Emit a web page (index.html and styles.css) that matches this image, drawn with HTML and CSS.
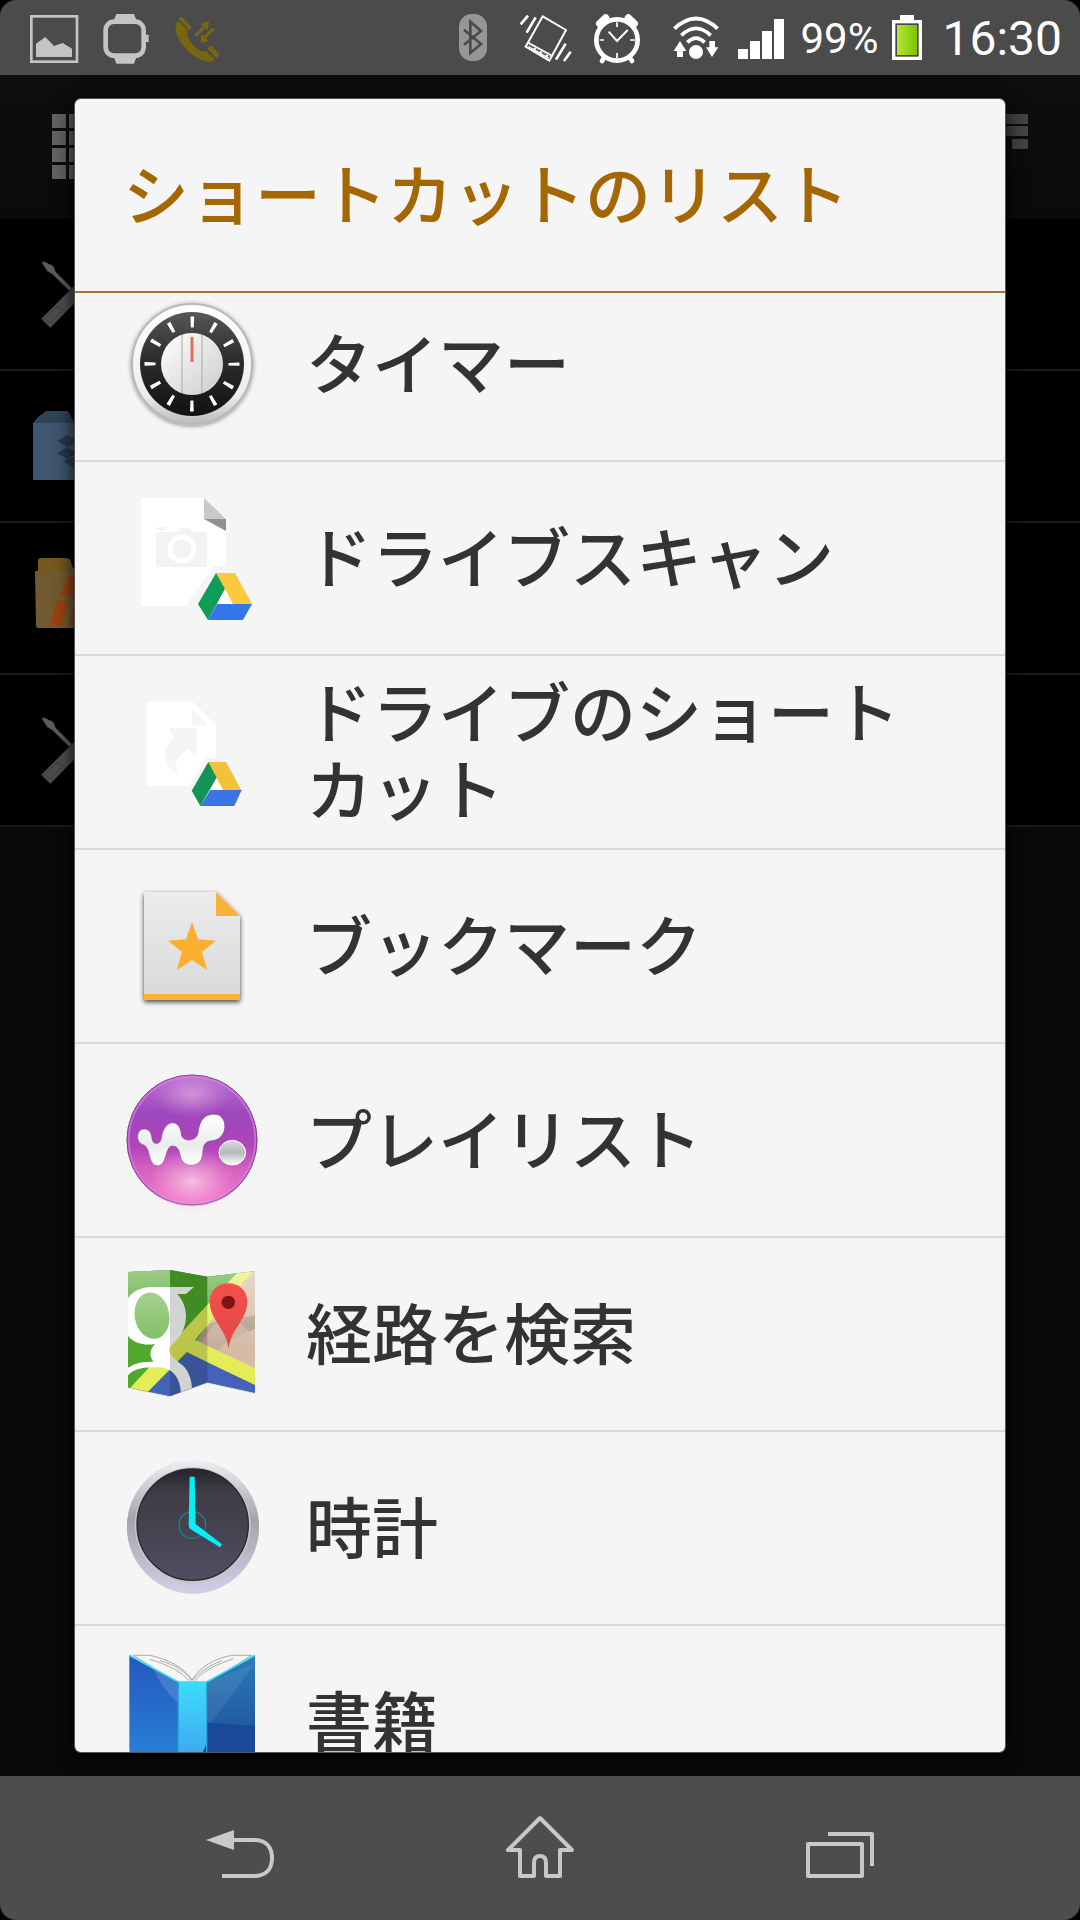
FILE: index.html
```html
<!DOCTYPE html>
<html lang="ja">
<head>
<meta charset="utf-8">
<meta name="viewport" content="width=device-width, initial-scale=1">
<title>ショートカットのリスト</title>
<link rel="stylesheet" href="styles.css">
</head>
<body>
<div class="screen">
  <header class="status-bar">
    <div class="status-group">
      <svg class="status-icon" viewBox="90 42 144 144" aria-hidden="true"><rect x="94" y="46" width="137" height="136" fill="none" stroke="#c4c4c4" stroke-width="8"/><path d="M108 168V128L136 108L162 135L188 126L216 143V168Z" fill="#c4c4c4"/></svg>
      <svg class="status-icon" viewBox="306 42 144 144" aria-hidden="true"><rect x="317" y="62" width="114" height="102" rx="25" fill="none" stroke="#c4c4c4" stroke-width="14"/><path d="M342 57L349 39H402L409 57ZM342 169L349 188H402L409 169ZM436 101H446V123H436Z" fill="#c4c4c4"/></svg>
      <svg class="status-icon" viewBox="522 42 144 144" aria-hidden="true"><g fill="#776711"><path d="M528 66C524 84 530 106 546 130C570 160 600 182 632 183L645 176L618 150L606 152C590 144 572 126 562 104L563 90L538 60Z"/><path d="M535 52L545 47L576 79L567 88ZM622 143L634 133L659 161L650 172Z"/><path d="M583 101L609 75L602 68L627 59L623 88L616 81L589 107ZM644 86L618 112L626 120L601 127L605 98L612 105L638 79Z"/></g></svg>
    </div>
    <div class="status-group">
      <svg class="status-icon" viewBox="30 42 144 144" aria-hidden="true"><rect x="60" y="39" width="84" height="141" rx="38" fill="#969696"/><path d="M75 86L126 129L94 156V62L126 90L75 131" fill="none" stroke="#4b4b4b" stroke-width="8"/></svg>
      <svg class="status-icon" viewBox="246 42 144 144" aria-hidden="true"><g fill="none" stroke="#fff"><path d="M311 46L381 87L331 179L260 137Z" stroke-width="6"/><path d="M268 125L341 165" stroke-width="5"/><path d="M270 135L330 169" stroke-width="9"/><path d="M272 134L330 167" stroke="#4b4b4b" stroke-width="4" stroke-dasharray="15 6"/><path d="M267 44L245 70M290 49L263 95M380 128L351 176M395 152L375 180" stroke-width="8"/></g></svg>
      <svg class="status-icon" viewBox="462 42 144 144" aria-hidden="true"><g fill="none" stroke="#fff"><circle cx="534" cy="117" r="62" stroke-width="14"/><path d="M509 92L534 120L566 87" stroke-width="6"/><path d="M534 64V78M534 156V172M482 117H495M573 117H588" stroke-width="5"/><path d="M482 68L500 51M586 68L568 51" stroke-width="22" stroke-linecap="round"/><path d="M495 170L489 180M573 170L579 180" stroke-width="14" stroke-linecap="round"/></g></svg>
      <svg class="status-icon" viewBox="678 42 144 144" aria-hidden="true"><g fill="none" stroke="#fff" stroke-width="11"><path d="M706 83Q771 22 836 83M727 103Q771 61 815 103M745 124Q771 99 797 124"/></g><path d="M723 120L742 150H732V168H714V150H704ZM819 168L838 139H828V120H811V139H801Z" fill="#fff"/><circle cx="771" cy="153" r="21" fill="#fff"/></svg>
      <svg class="status-icon" viewBox="894 42 144 144" aria-hidden="true"><path d="M897 144h30v30h-30ZM933 120h30v54h-30ZM969 90h30v84h-30ZM1005 54h30v120h-30Z" fill="#fff"/></svg>
      <span class="battery-level">99%</span>
      <svg class="battery-icon" viewBox="339 42 90 144" aria-hidden="true"><defs><linearGradient id="charge" x1="0" x2="1"><stop offset="0" stop-color="#b5e63a"/><stop offset="1" stop-color="#7cc400"/></linearGradient></defs><path d="M363 42H405V57H363Z" fill="#fff"/><rect x="344" y="62" width="80" height="110" fill="#484848" stroke="#fff" stroke-width="10"/><rect x="354" y="72" width="60" height="90" fill="url(#charge)"/></svg>
      <time class="clock">16:30</time>
    </div>
  </header>

  <main class="stage">
    <div class="app" aria-hidden="true">
      <div class="app-bar">
        <svg class="app-glyph" viewBox="0 0 66 66"><path d="M0 0h14v14H0ZM17 0h14v14H17ZM34 0h14v14H34ZM0 17h14v14H0ZM17 17h14v14H17ZM34 17h14v14H34ZM0 34h14v14H0ZM17 34h14v14H17ZM34 34h14v14H34ZM0 51h14v14H0ZM17 51h14v14H17ZM34 51h14v14H34Z" fill="#626262"/></svg>
        <svg class="app-glyph" viewBox="0 0 66 66"><path d="M12 0h54v10H12ZM12 12h54v10H12ZM50 25h16v10H50Z" fill="#444"/></svg>
      </div>
      <div class="app-row">
        <svg class="app-icon" viewBox="72 150 360 360"><path d="M130 232L160 246L167 264L216 312L208 320L157 270L142 262L126 237Z" fill="#5a5a5a"/><path d="M124 404L250 278L276 304L151 431Z" fill="#4d4d4d"/><path d="M134 404L172 367L188 378L152 417Z" fill="none" stroke="#383838" stroke-width="3"/></svg>
      </div>
      <div class="app-row">
        <svg class="app-icon" viewBox="0 0 120 120"><path d="M9 37L14 31L22 25H44L50 36H100V94H9Z" fill="#2f4357"/><path d="M9 37H100V92Q100 94 98 94H11Q9 94 9 92Z" fill="#3f566f"/><path d="M33 55L43 49L53 55L43 61ZM33 67L43 61L53 67L43 73ZM39 75L53 70V84Z" fill="#26394e"/></svg>
      </div>
      <div class="app-row">
        <svg class="app-icon" viewBox="0 0 120 120"><path d="M14 33V23Q14 20 17 20H42Q46 20 47 24L49 30H100V90H14Z" fill="#75571f"/><path d="M11 33H100V90H14Q12 90 12 87Z" fill="#715a31"/><path d="M45 38H53V60L35 57ZM33 62L45 64L38 87L26 88ZM48 70L53 60V88H46Z" fill="#984213"/></svg>
      </div>
      <div class="app-row">
        <svg class="app-icon" viewBox="72 150 360 360"><path d="M130 232L160 246L167 264L216 312L208 320L157 270L142 262L126 237Z" fill="#5a5a5a"/><path d="M124 404L250 278L276 304L151 431Z" fill="#4d4d4d"/><path d="M134 404L172 367L188 378L152 417Z" fill="none" stroke="#383838" stroke-width="3"/></svg>
      </div>
    </div>

    <div class="overlay">
      <section class="dialog" role="dialog" aria-labelledby="dialog-title">
        <h1 class="dialog-title" id="dialog-title">ショートカットのリスト</h1>
        <div class="dialog-body">
          <ul class="shortcut-list">
            <li><button class="shortcut" type="button">
              <svg class="shortcut-icon" viewBox="0 0 144 144" aria-hidden="true">
                <defs><linearGradient id="dialRim" x2="0" y2="1"><stop offset="0" stop-color="#fff"/><stop offset=".75" stop-color="#eee"/><stop offset="1" stop-color="#bbb"/></linearGradient><linearGradient id="dialFace" x2="0" y2="1"><stop offset="0" stop-color="#585858"/><stop offset=".4" stop-color="#303030"/><stop offset="1" stop-color="#111"/></linearGradient><linearGradient id="dialKnob" x2="1" y2="1"><stop offset="0" stop-color="#fff"/><stop offset="1" stop-color="#ccc"/></linearGradient><filter id="soft" x="-10%" y="-10%" width="120%" height="120%"><feDropShadow dx="0" dy="1" stdDeviation="2" flood-opacity=".45"/></filter></defs>
                <circle cx="72" cy="72" r="60" fill="url(#dialRim)" stroke="#b8b8b8" stroke-width="2" filter="url(#soft)"/>
                <circle cx="72" cy="72" r="52" fill="url(#dialFace)"/>
                <circle cx="72" cy="72" r="42" fill="none" stroke="#fff" stroke-width="11" stroke-dasharray="3.4 18.59" stroke-dashoffset="1.7"/>
                <circle cx="72" cy="72" r="31" fill="url(#dialKnob)"/>
                <path d="M62 43V101M82 43V101" stroke="#aaa" stroke-width="1"/><path d="M72 45V70" stroke="#e0705a" stroke-width="3"/>
              </svg>
              <span class="shortcut-label">タイマー</span></button></li>
            <li><button class="shortcut" type="button">
              <svg class="shortcut-icon" viewBox="0 0 144 144" aria-hidden="true">
                <path d="M21 12H84L106 33V80H94L72 110L67 120H21Z" fill="#fff"/><path d="M84 12L106 33H84Z" fill="#c9c9c9"/><path d="M84 33H106V45Z" fill="#909090"/>
                <path d="M36 46H58L62 42H70L74 46H87V81H36ZM37 41H46V44H37Z" fill="#f3f3f3"/><circle cx="62" cy="63" r="12" fill="#f3f3f3" stroke="#fff" stroke-width="5"/>
                <path d="M96 87H115L132 118H112Z" fill="#fbc93c"/><path d="M96 87L105 103L88 134L78 118Z" fill="#0f9d58"/><path d="M97 118H132L123 134H88Z" fill="#3577ea"/><path d="M105 103L113 118H97Z" fill="#fff"/>
              </svg>
              <span class="shortcut-label">ドライブスキャン</span></button></li>
            <li><button class="shortcut" type="button">
              <svg class="shortcut-icon" viewBox="60 120 432 432" aria-hidden="true">
                <path d="M141 183H276L348 255V354H318L268 437H141Z" fill="#fff"/><path d="M276 206L324 255H276Z" fill="#f5f5f5"/>
                <path d="M205 264H290V350L262 328C232 350 216 372 237 405C196 388 176 330 222 292Z" fill="#f5f5f5"/>
                <path d="M325 366H378L425 452H367Z" fill="#f3c239"/><path d="M325 366L350 413L301 498L275 452Z" fill="#159356"/><path d="M331 450H425L403 498H301Z" fill="#3b74e4"/><path d="M350 413L369 450H330Z" fill="#fff"/>
              </svg>
              <span class="shortcut-label">ドライブのショートカット</span></button></li>
            <li><button class="shortcut" type="button">
              <svg class="shortcut-icon" viewBox="60 702 432 432" aria-hidden="true">
                <defs><linearGradient id="paper" x2="0" y2="1"><stop offset="0" stop-color="#ececec"/><stop offset="1" stop-color="#d9d9d9"/></linearGradient><filter id="paperShadow" x="-10%" y="-10%" width="120%" height="120%"><feDropShadow dx="0" dy="6" stdDeviation="8" flood-opacity=".75"/></filter></defs>
                <path d="M132 756H348L420 828V1080H132Z" fill="url(#paper)" filter="url(#paperShadow)"/><path d="M132 1062H420V1080H132ZM348 756L420 828H348Z" fill="#f9b13c"/>
                <path d="M276 846L294 898L348 902L306 936L322 991L276 960L230 991L246 936L204 902L258 898Z" fill="#fbae30"/>
              </svg>
              <span class="shortcut-label">ブックマーク</span></button></li>
            <li><button class="shortcut" type="button">
              <svg class="shortcut-icon" viewBox="60 84 432 432" aria-hidden="true">
                <defs><linearGradient id="orb" x2="0" y2="1"><stop offset="0" stop-color="#b873d2"/><stop offset=".3" stop-color="#9d46bd"/><stop offset=".55" stop-color="#b044b8"/><stop offset=".75" stop-color="#d765bf"/><stop offset="1" stop-color="#f06cc4"/></linearGradient><radialGradient id="orbGlow"><stop offset="0" stop-color="#ffd9f2" stop-opacity=".75"/><stop offset="1" stop-color="#ffb0e4" stop-opacity="0"/></radialGradient><linearGradient id="silver" x2="0" y2="1"><stop offset="0" stop-color="#fff"/><stop offset=".6" stop-color="#e9eced"/><stop offset="1" stop-color="#fff"/></linearGradient><linearGradient id="bead" x2="0" y2="1"><stop offset="0" stop-color="#d9dcdd"/><stop offset=".5" stop-color="#b4b9bb"/><stop offset="1" stop-color="#fff"/></linearGradient></defs>
                <circle cx="276" cy="300" r="195" fill="url(#orb)" stroke="#7c3a86" stroke-width="3" filter="url(#soft)"/><circle cx="276" cy="300" r="190" fill="none" stroke="#d77be8" stroke-width="6" opacity=".7"/>
                <ellipse cx="276" cy="425" rx="135" ry="100" fill="url(#orbGlow)"/><ellipse cx="276" cy="165" rx="120" ry="70" fill="url(#orbGlow)" opacity=".6"/>
                <path d="M133 267C149 267 154 280 156 296C158 316 181 314 184 296C190 238 240 232 244 284C248 306 288 306 294 280C298 240 315 223 342 223C388 223 384 300 336 302C300 306 314 334 304 358C294 382 250 384 242 352C238 332 234 318 217 318C194 318 202 376 174 377C142 378 154 322 130 314C106 308 108 267 133 267Z" fill="url(#silver)" stroke="#79438b" stroke-opacity=".5" stroke-width="3"/>
                <ellipse cx="397" cy="338" rx="40" ry="37" fill="url(#bead)" stroke="#fff" stroke-width="3"/>
              </svg>
              <span class="shortcut-label">プレイリスト</span></button></li>
            <li><button class="shortcut" type="button">
              <svg class="shortcut-icon" viewBox="60 666 432 432" aria-hidden="true">
                <defs><clipPath id="mapShape"><path d="M84 696L210 690L322 710L465 694V1058L322 1027L210 1068L84 1042Z"/></clipPath><linearGradient id="pinRed" x2="0" y2="1"><stop offset="0" stop-color="#f4504c"/><stop offset="1" stop-color="#e04844"/></linearGradient><linearGradient id="mapLight" x2="0" y2="1"><stop offset="0" stop-color="#fff" stop-opacity=".45"/><stop offset=".6" stop-color="#fff" stop-opacity="0"/></linearGradient></defs>
                <path d="M84 696L210 690L322 710L465 694V1058L322 1027L210 1068L84 1042Z" fill="#888" filter="url(#soft)"/>
                <g clip-path="url(#mapShape)">
                  <rect x="80" y="680" width="390" height="400" fill="#50a72c"/>
                  <path d="M440 680H470V1060L290 905L330 840Z" fill="#d6bba7"/><path d="M290 900L330 850L465 826V866L380 905L350 935Z" fill="#b39e8c"/><path d="M345 850H420L465 890V985L300 910Z" fill="#d6bba7" opacity=".6"/>
                  <path d="M80 1055L410 700L465 686L285 900L465 985V1040L260 935L130 1070Z" fill="#e4ed58"/>
                  <path d="M130 1070L262 938L465 1035V1080H130Z" fill="#4562b8"/>
                  <path d="M282 741L258 762H232C275 810 262 880 212 918C196 936 222 955 248 976C272 1000 278 1030 276 1070H243C244 1010 214 980 170 982C124 980 96 990 82 1008V985C104 968 130 965 160 965C144 944 152 926 165 912C120 920 88 900 80 880V780C100 748 130 741 160 741Z" fill="#fff"/>
                  <ellipse cx="156" cy="827" rx="52" ry="70" transform="rotate(-10 156 827)" fill="#7dbd60"/>
                  <path d="M84 680H210V1080H84Z" fill="url(#mapLight)"/><path d="M210 680H322V1080H210Z" fill="#001008" opacity=".18"/><path d="M322 680H465V1080H322Z" fill="url(#mapLight)"/>
                </g>
                <path d="M386 928C382 868 329 840 329 785C329 711 442 711 442 785C442 840 390 868 386 928Z" fill="url(#pinRed)"/><circle cx="385" cy="787" r="20" fill="#7e1512"/>
              </svg>
              <span class="shortcut-label">経路を検索</span></button></li>
            <li><button class="shortcut" type="button">
              <svg class="shortcut-icon" viewBox="60 108 432 432" aria-hidden="true">
                <defs><linearGradient id="clockRim" x2="0" y2="1"><stop offset="0" stop-color="#efeff1"/><stop offset=".45" stop-color="#a5a3aa"/><stop offset="1" stop-color="#d0cfe9"/></linearGradient><linearGradient id="clockFace" x2="0" y2="1"><stop offset="0" stop-color="#26242d"/><stop offset=".2" stop-color="#3e3c44"/><stop offset="1" stop-color="#524d61"/></linearGradient></defs>
                <circle cx="279" cy="320" r="198" fill="url(#clockRim)" filter="url(#soft)"/><circle cx="278" cy="316" r="174" fill="#c6c5cb"/><circle cx="278" cy="314" r="167" fill="url(#clockFace)" stroke="#29272f" stroke-width="4"/>
                <circle cx="277" cy="315" r="40" fill="none" stroke="#16828c" stroke-width="4"/><path d="M269 170H284L287 312L366 373L360 382L272 328Q266 324 266 316Z" fill="#06eff2"/>
              </svg>
              <span class="shortcut-label">時計</span></button></li>
            <li><button class="shortcut" type="button">
              <svg class="shortcut-icon" viewBox="60 690 432 432" aria-hidden="true">
                <defs><linearGradient id="coverLeft" x2="0" y2="1"><stop offset="0" stop-color="#2458bd"/><stop offset="1" stop-color="#2784d8"/></linearGradient><linearGradient id="spine" x2="0" y2="1"><stop offset="0" stop-color="#3ddcfb"/><stop offset="1" stop-color="#3ea0ef"/></linearGradient><linearGradient id="coverRight" x2="0" y2="1"><stop offset="0" stop-color="#297dbb"/><stop offset="1" stop-color="#1e4590"/></linearGradient></defs>
                <path d="M100 706H150C200 718 250 738 276 780C300 738 350 714 395 706H455L320 790H235Z" fill="#f5f5f5" stroke="#aaa" stroke-width="3"/><path d="M180 722C225 735 258 755 274 782M365 722C325 738 295 758 278 782M150 718C205 735 245 755 268 784M400 716C345 735 305 755 284 784" fill="none" stroke="#aaa" stroke-width="3"/>
                <path d="M88 706L235 786V1040H100Q88 1010 88 980Z" fill="url(#coverLeft)"/><path d="M465 706L320 786V1040H453Q465 1010 465 980Z" fill="url(#coverRight)"/><path d="M235 786H320V1040H235Z" fill="url(#spine)"/>
                <path d="M320 908L465 918V1040H290L320 970Z" fill="#1b4999"/><path d="M160 745L235 786V850Q180 800 160 745Z" fill="#fff" opacity=".15"/><path d="M465 730L335 908L320 905V786Z" fill="#fff" opacity=".08"/>
                <path d="M88 706L235 786H320L465 706" fill="none" stroke="#35e0fb" stroke-width="5"/><path d="M235 786V1040M320 786V1040" stroke="#2ba4dc" stroke-width="4"/>
              </svg>
              <span class="shortcut-label">書籍</span></button></li>
          </ul>
        </div>
      </section>
    </div>
  </main>

  <nav class="nav-bar">
    <button class="nav-button" type="button" aria-label="戻る"><svg class="nav-icon" viewBox="0 0 72 72"><path d="M2 28L30 18V38Z" fill="#c8c8c8"/><path d="M28 28H50C63 28 68 36 68 46C68 57 62 64 50 64H18" fill="none" stroke="#c8c8c8" stroke-width="4"/></svg></button>
    <button class="nav-button" type="button" aria-label="ホーム"><svg class="nav-icon" viewBox="0 0 72 72"><path d="M36 6L4 38H16V64H30V51Q30 44 36 44Q42 44 42 51V64H56V38H68Z" fill="none" stroke="#c8c8c8" stroke-width="4" stroke-linejoin="round"/></svg></button>
    <button class="nav-button" type="button" aria-label="最近使ったアプリ"><svg class="nav-icon" viewBox="0 0 72 72"><path d="M4 32H58V64H4ZM24 22H68V54" fill="none" stroke="#c8c8c8" stroke-width="4" stroke-linejoin="round"/></svg></button>
  </nav>
</div>
</body>
</html>
```
FILE: styles.css
```css
* {
  box-sizing: border-box;
}

body {
  margin: 0;
  background: #000;
  font-family: "Noto Sans CJK JP", "Noto Sans", sans-serif;
}

button {
  margin: 0;
  border: 0;
  background: none;
  font: inherit;
  color: inherit;
  text-align: left;
}

svg {
  display: block;
  flex: none;
  overflow: visible;
}

.screen {
  display: flex;
  flex-direction: column;
  height: 100vh;
}

/* Status bar */

.status-bar {
  display: flex;
  justify-content: space-between;
  align-items: center;
  flex: none;
  height: 75px;
  padding: 2px 18px 0 30px;
  border-radius: 16px 16px 0 0;
  background: #4b4b4b;
  color: #fff;
  font-family: Roboto, sans-serif;
}

.status-group {
  display: flex;
  align-items: center;
  gap: 24px;
}

.status-icon {
  width: 48px;
  height: 48px;
}

.battery-level {
  margin-left: -9px;
  font-size: 42px;
}

.battery-icon {
  width: 30px;
  height: 48px;
  margin-left: -10px;
}

.clock {
  margin-left: -4px;
  font-size: 48px;
}

/* Dimmed app and the dialog over it share one grid cell */

.stage {
  display: grid;
  grid-template: minmax(0, 1fr) / minmax(0, 1fr);
  flex: 1;
  min-height: 0;
}

.app,
.overlay {
  grid-area: 1 / 1;
}

.app {
  background: #090909;
}

.app-bar {
  display: flex;
  justify-content: space-between;
  height: 144px;
  padding: 39px 52px;
  background: linear-gradient(#0e0e0e, #0a0a0a);
}

.app-glyph {
  width: 66px;
  height: 66px;
}

.app-row {
  display: flex;
  align-items: center;
  height: 152px;
  padding-left: 24px;
  border-bottom: 2px solid #1a1a1a;
  background: #000;
}

.app-icon {
  width: 120px;
  height: 120px;
}

/* Dialog */

.overlay {
  display: flex;
  z-index: 1;
  padding: 24px 75px;
}

.dialog {
  display: flex;
  flex: 1;
  flex-direction: column;
  min-width: 0;
  overflow: hidden;
  border-radius: 6px;
  background: #f5f5f5;
  box-shadow: 0 0 0 1px #555, 0 4px 20px #000;
  color: #333;
}

.dialog-title {
  display: flex;
  align-items: center;
  flex: none;
  height: 194px;
  margin: 0;
  padding: 0 48px 8px;
  border-bottom: 2px solid #a5762a;
  color: #a56703;
  font-size: 66px;
  font-weight: 500;
  line-height: 77px;
}

.dialog-body {
  flex: 1;
  min-height: 0;
  overflow: hidden;
}

/* The list is scrolled slightly past its first row */
.shortcut-list {
  margin: -25px 0 0;
  padding: 0;
  list-style: none;
}

.shortcut {
  display: flex;
  align-items: center;
  gap: 42px;
  width: 100%;
  height: 194px;
  padding: 0 48px 0 45px;
  border-bottom: 2px solid #d8d8d8;
}

.shortcut-icon {
  width: 144px;
  height: 144px;
}

.shortcut-label {
  padding-bottom: 8px;
  font-size: 66px;
  font-weight: 500;
  line-height: 77px;
}

/* Navigation bar */

.nav-bar {
  display: flex;
  justify-content: center;
  flex: none;
  height: 144px;
  border-radius: 0 0 16px 16px;
  background: #4d4d4d;
}

.nav-button {
  display: flex;
  justify-content: center;
  align-items: center;
  flex: 0 1 300px;
  padding: 0;
}

.nav-icon {
  width: 72px;
  height: 72px;
}
```
